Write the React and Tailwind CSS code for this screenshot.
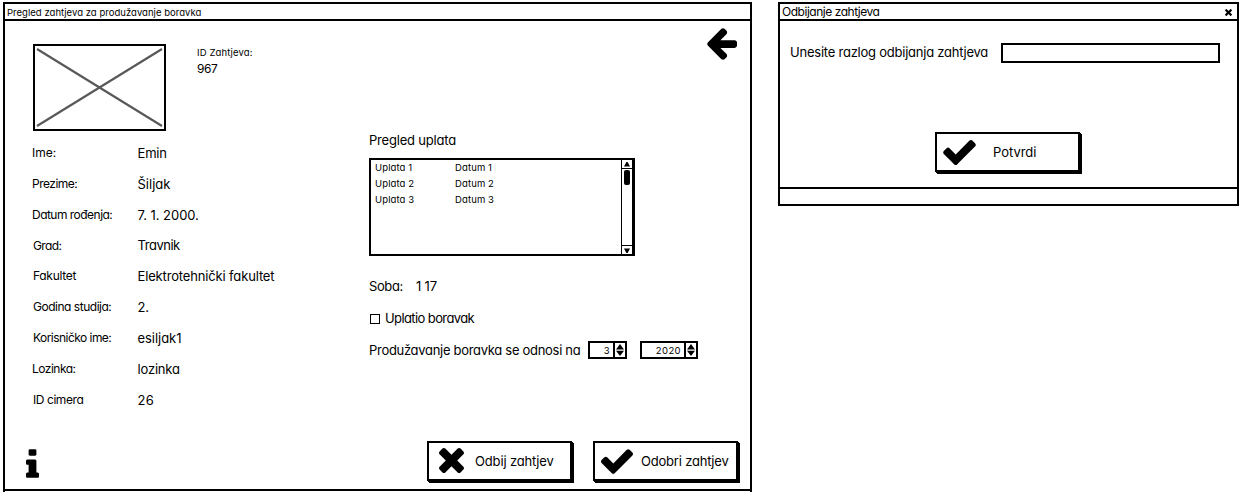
import React from "react";

const ICONS = {
  check: {
    box: "121 334 1550 1188",
    d: "M1671 566q0 40-28 68l-724 724-136 136q-28 28-68 28t-68-28l-136-136-362-362q-28-28-28-68t28-68l136-136q28-28 68-28t68 28l294 295 656-657q28-28 68-28t68 28l136 136q28 28 28 68z",
  },
  times: {
    box: "110 366 1188 1188",
    d: "M1298 1322q0 40-28 68l-136 136q-28 28-68 28t-68-28l-294-294-294 294q-28 28-68 28t-68-28l-136-136q-28-28-28-68t28-68l294-294-294-294q-28-28-28-68t28-68l136-136q28-28 68-28t68 28l294 294 294-294q28-28 68-28t68 28l136 136q28 28 28 68t-28 68l-294 294 294 294q28 28 28 68z",
  },
  arrowLeft: {
    box: "128 173 1536 1574",
    d: "M1664 896v128q0 53-32.5 90.5t-84.5 37.5h-704l293 294q38 36 38 90t-38 90l-75 76q-37 37-90 37-52 0-91-37l-651-652q-37-37-37-90 0-52 37-91l651-650q38-38 91-38 52 0 90 38l75 74q38 38 38 91t-38 91l-293 293h704q52 0 84.5 37.5t32.5 90.5z",
  },
  info: {
    box: "576 128 640 1408",
    d: "M1216 1344v128q0 26-19 45t-45 19h-512q-26 0-45-19t-19-45v-128q0-26 19-45t45-19h64v-384h-64q-26 0-45-19t-19-45v-128q0-26 19-45t45-19h384q26 0 45 19t19 45v576h64q26 0 45 19t19 45zm-128-1152v192q0 26-19 45t-45 19h-256q-26 0-45-19t-19-45v-192q0-26 19-45t45-19h256q26 0 45 19t19 45z",
  },
};

function Icon({ name, className }) {
  return (
    <svg viewBox={ICONS[name].box} className={"shrink-0 fill-black " + className} aria-hidden="true">
      <path d={ICONS[name].d} />
    </svg>
  );
}

const FIELDS = [
  ["Ime:", "", "Emin", "tracking-[-0.18px]"],
  ["Prezime:", "tracking-[-0.5px]", "Šiljak", "pt-px tracking-[0px]"],
  ["Datum rođenja:", "tracking-[-0.52px]", "7. 1. 2000.", "pt-px tracking-[-0.04px]"],
  ["Grad:", "pl-px tracking-[-0.63px]", "Travnik", "tracking-[-0.47px]"],
  ["Fakultet", "pl-px tracking-[-0.3px]", "Elektrotehnički fakultet", "tracking-[-0.15px]"],
  ["Godina studija:", "pl-px tracking-[-0.48px]", "2.", "pt-px tracking-[-0.19px]"],
  ["Korisničko ime:", "pl-px tracking-[-0.54px]", "esiljak1", "pt-px tracking-[-0.05px]"],
  ["Lozinka:", "tracking-[-0.5px]", "lozinka", "pt-[3px] tracking-[-0.18px]"],
  ["ID cimera", "pl-px pt-px tracking-[-0.43px]", "26", "pt-[2px] tracking-[0.4px]"],
];

const PAYMENTS = [
  ["Uplata 1", "Datum 1"],
  ["Uplata 2", "Datum 2"],
  ["Uplata 3", "Datum 3"],
];

function SketchButton({ icon, iconClass, label, labelClass, className = "" }) {
  return (
    <button
      className={
        "flex h-[40px] w-[145px] items-center border-2 border-black text-[13px] shadow-[1px_1px_0_#000,2px_2px_0_#000] " +
        className
      }
    >
      <Icon name={icon} className={iconClass} />
      <span className={"pt-px whitespace-nowrap " + labelClass}>{label}</span>
    </button>
  );
}

function Spinner({ value, className }) {
  return (
    <div className={"flex h-[18px] border-2 border-black bg-white " + className}>
      <span className="flex-1 pr-[3px] text-right text-[9.5px] leading-[15px] tracking-[0.4px]">{value}</span>
      <span className="flex w-[12px] items-center justify-center border-l-2 border-black">
        <svg viewBox="0 0 8 12" className="h-[12px] w-[8px] fill-black" aria-hidden="true">
          <path d="M4 0 8 5.5H0ZM4 12 0 6.8h8Z" />
        </svg>
      </span>
    </div>
  );
}

function ScrollArrow({ down, className }) {
  return (
    <span className={"flex h-[9px] items-center justify-center border-black " + className}>
      <svg viewBox="0 0 6 5" className="h-[5px] w-[6px] fill-black" aria-hidden="true">
        <path d={down ? "M0 .5h6L3.6 5H2.4Z" : "M2.4 0h1.2L6 4.5H0Z"} />
      </svg>
    </span>
  );
}

function RequestWindow() {
  return (
    <section className="ml-[3px] flex h-[506px] w-[749px] shrink-0 flex-col border-2 border-black">
      <header className="h-[17px] shrink-0 border-b-2 border-black pl-[2px] text-[9.5px] leading-[17px] tracking-[0.03px]">
        Pregled zahtjeva za produžavanje boravka
      </header>
      <div className="flex h-[468px] shrink-0">
        <div className="w-[364px] pt-[23px]">
          <div className="ml-[28px] flex gap-[31px]">
            <div className="h-[87px] w-[133px] border-2 border-black">
              <svg viewBox="0 0 129 83" className="h-full w-full stroke-[#595959] stroke-[2.2]" aria-hidden="true">
                <path d="M2 3 127 80M2 80 127 3" />
              </svg>
            </div>
            <div className="whitespace-nowrap">
              <div className="h-[16px] pt-px text-[9.5px] leading-[16px] tracking-[0.12px]">ID Zahtjeva:</div>
              <div className="text-[12px] leading-[17px] tracking-[-0.4px]">967</div>
            </div>
          </div>
          <dl className="ml-[27px] pt-[7px]">
            {FIELDS.map(([label, labelClass, value, valueClass]) => (
              <div key={label} className="flex h-[30.75px] items-center whitespace-nowrap">
                <dt className={"w-[105.5px] text-[12px] " + labelClass}>{label}</dt>
                <dd className={"text-[13px] " + valueClass}>{value}</dd>
              </div>
            ))}
          </dl>
          <Icon name="info" className="mt-[34px] ml-[21px] h-[29px] w-[13px]" />
        </div>

        <div className="flex flex-1 flex-col">
          <Icon name="arrowLeft" className="mt-[7px] mr-[13px] h-[32px] w-[31px] self-end" />
          <h2 className="mt-[70px] text-[13px] leading-[20px] tracking-[-0.2px]">Pregled uplata</h2>
          <div className="mt-[8px] flex h-[98px] w-[266px] border-2 border-r-[3px] border-black">
            <div className="flex-1 text-[9.5px] tracking-[0.12px]">
              {PAYMENTS.map(([name, date]) => (
                <div key={name} className="flex h-[16px] items-center pl-[4px]">
                  <span className="w-[80px]">{name}</span>
                  <span>{date}</span>
                </div>
              ))}
            </div>
            <div className="flex w-[11px] flex-col border-l border-black">
              <ScrollArrow className="border-b" />
              <span className="mx-auto mt-px h-[15px] w-[6px] rounded-[2px] bg-black" />
              <ScrollArrow down className="mt-auto border-t" />
            </div>
          </div>
          <div className="mt-[20px] flex text-[13px] leading-[20px]">
            <span className="w-[47px] tracking-[-0.4px]">Soba:</span>
            <span className="tracking-[-0.2px]">1 17</span>
          </div>
          <div className="mt-[12px] flex items-center text-[13px] leading-[20px]">
            <span className="mt-px mr-[5px] ml-px h-[10px] w-[10px] border border-black" />
            <span className="tracking-[-0.6px]">Uplatio boravak</span>
          </div>
          <div className="mt-[12px] flex h-[20px] items-center text-[13px]">
            <span className="w-[219px] pt-px whitespace-nowrap tracking-[-0.3px]">Produžavanje boravka se odnosi na</span>
            <Spinner value="3" className="w-[39px]" />
            <Spinner value="2020" className="ml-[13px] w-[58px]" />
          </div>
          <div className="mt-[81px] ml-[58px] flex gap-[21px]">
            <SketchButton
              icon="times"
              iconClass="ml-[10px] -mt-px h-[25px] w-[25px]"
              label="Odbij zahtjev"
              labelClass="ml-[11px] tracking-[-0.15px]"
            />
            <SketchButton
              icon="check"
              iconClass="ml-[6px] h-[25px] w-[32px]"
              label="Odobri zahtjev"
              labelClass="ml-[8px] tracking-[-0.2px]"
            />
          </div>
        </div>
      </div>
      <footer className="flex-1 border-t-2 border-black" />
    </section>
  );
}

function RejectDialog() {
  return (
    <section className="ml-[26px] flex h-[204px] w-[461px] shrink-0 flex-col border-2 border-black">
      <header className="flex h-[17px] shrink-0 items-center justify-between border-b-2 border-black pr-[5px] pl-[2px]">
        <span className="text-[12px] leading-[15px] tracking-[-0.47px]">Odbijanje zahtjeva</span>
        <Icon name="times" className="mt-[2px] h-[7px] w-[7px]" />
      </header>
      <div className="flex flex-1 flex-col">
        <label className="mt-[22px] ml-[10px] flex items-center text-[13px] tracking-[-0.23px]">
          <span className="w-[211px] whitespace-nowrap">Unesite razlog odbijanja zahtjeva</span>
          <input className="h-[20px] w-[219px] border-2 border-black" />
        </label>
        <SketchButton
          icon="check"
          iconClass="ml-[6px] h-[25px] w-[33px]"
          label="Potvrdi"
          labelClass="ml-[17px] tracking-[-0.05px]"
          className="mt-[69px] ml-[155px]"
        />
      </div>
      <footer className="h-[17px] shrink-0 border-t-2 border-black" />
    </section>
  );
}

export default function App() {
  return (
    <main className="flex h-[492px] w-[1243px] items-start overflow-hidden bg-white pt-[2px] font-['Inter',sans-serif] text-black [font-feature-settings:'cv11']">
      <RequestWindow />
      <RejectDialog />
    </main>
  );
}
